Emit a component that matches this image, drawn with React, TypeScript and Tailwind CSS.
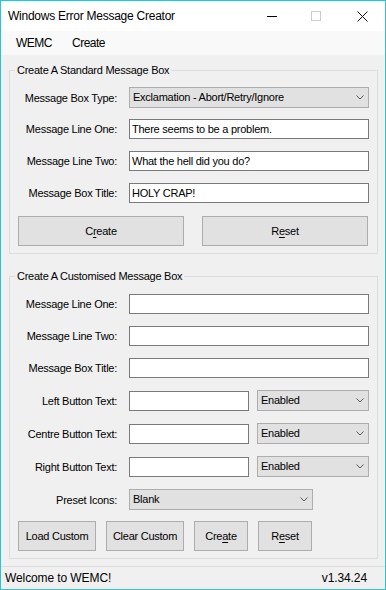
import React from "react";

function Sel({ w, text }: { w: string; text: string }) {
  return (
    <div className={`${w} h-[21px] bg-[#e1e1e1] border border-[#adadad] flex items-center pl-[3px] pr-[4px] shrink-0`}>
      <span className="flex-1 whitespace-nowrap">{text}</span>
      <svg width="8" height="5" viewBox="0 0 8 5" className="shrink-0">
        <path d="M0.5 0.5 L4 4 L7.5 0.5" stroke="#5a5a5a" strokeWidth="1" fill="none" />
      </svg>
    </div>
  );
}

function Inp({ w, text }: { w: string; text?: string }) {
  return (
    <div className={`${w} h-[20px] bg-white border border-[#7a7a7a] flex items-center pl-[2px] shrink-0 whitespace-nowrap`}>
      {text}
    </div>
  );
}

function Label({ children }: { children: React.ReactNode }) {
  return <div className="w-[107px] text-right mr-[12px] whitespace-nowrap shrink-0 leading-[14px]">{children}</div>;
}

function Btn({ w, children }: { w: string; children: React.ReactNode }) {
  return (
    <div className={`${w} h-[30px] bg-[#e1e1e1] border border-[#adadad] flex items-center justify-center whitespace-nowrap shrink-0`}>
      {children}
    </div>
  );
}

export default function App() {
  return (
    <div className="w-[386px] h-[590px] border border-[#2ec3d2] bg-[#f0f0f0] flex flex-col text-black font-['Liberation_Sans',Arial,sans-serif] text-[11px] tracking-[-0.25px] overflow-hidden">
      {/* Title bar */}
      <div className="h-[30px] bg-white flex items-center shrink-0">
        <div className="pl-[7px] text-[12px] tracking-[-0.25px] flex-1 whitespace-nowrap">Windows Error Message Creator</div>
        <div className="w-[46px] h-[30px] flex items-center justify-center pl-[3px]">
          <svg width="10" height="10" viewBox="0 0 10 10">
            <path d="M0 5.5 H10" stroke="#000" strokeWidth="1" />
          </svg>
        </div>
        <div className="w-[46px] h-[30px] flex items-center justify-center">
          <svg width="10" height="10" viewBox="0 0 10 10">
            <rect x="0.5" y="0.5" width="9" height="9" stroke="#cccccc" strokeWidth="1" fill="none" />
          </svg>
        </div>
        <div className="w-[46px] h-[30px] flex items-center justify-center">
          <svg width="11" height="11" viewBox="0 0 11 11">
            <path d="M0.5 0.5 L10.5 10.5 M10.5 0.5 L0.5 10.5" stroke="#111" strokeWidth="1" fill="none" />
          </svg>
        </div>
      </div>
      {/* Menu bar */}
      <div className="h-[24px] bg-[#f9f9f9] flex items-center pl-[15px] text-[12px] tracking-[-0.5px] shrink-0">
        <span className="w-[56px]">WEMC</span>
        <span>Create</span>
      </div>

      {/* Group 1 */}
      <fieldset className="mt-[8px] ml-[8px] w-[369px] border border-[#dcdcdc] px-0 pt-[10px] pb-[7px] shrink-0">
        <legend className="ml-[5px] px-[2px] leading-[14px] text-[11px]">Create A Standard Message Box</legend>
        <div className="flex items-center">
          <Label>Message Box Type:</Label>
          <Sel w="w-[240px]" text="Exclamation - Abort/Retry/Ignore" />
        </div>
        <div className="flex items-center mt-[11px]">
          <Label>Message Line One:</Label>
          <Inp w="w-[240px]" text="There seems to be a problem." />
        </div>
        <div className="flex items-center mt-[12px]">
          <Label>Message Line Two:</Label>
          <Inp w="w-[240px]" text="What the hell did you do?" />
        </div>
        <div className="flex items-center mt-[12px]">
          <Label>Message Box Title:</Label>
          <Inp w="w-[240px]" text="HOLY CRAP!" />
        </div>
        <div className="flex mt-[13px] ml-[8px] gap-[18px]">
          <Btn w="w-[166px]">
            <span>
              C<span className="underline underline-offset-[2px]">r</span>eate
            </span>
          </Btn>
          <Btn w="w-[166px]">
            <span>
              R<span className="underline underline-offset-[2px]">e</span>set
            </span>
          </Btn>
        </div>
      </fieldset>

      {/* Group 2 */}
      <fieldset className="mt-[15px] ml-[8px] w-[369px] border border-[#dcdcdc] px-0 pt-[11px] pb-[7px] shrink-0">
        <legend className="ml-[5px] px-[2px] leading-[14px] text-[11px]">Create A Customised Message Box</legend>
        <div className="flex items-center">
          <Label>Message Line One:</Label>
          <Inp w="w-[240px]" />
        </div>
        <div className="flex items-center mt-[12px]">
          <Label>Message Line Two:</Label>
          <Inp w="w-[240px]" />
        </div>
        <div className="flex items-center mt-[12px]">
          <Label>Message Box Title:</Label>
          <Inp w="w-[240px]" />
        </div>
        <div className="flex items-center mt-[12px]">
          <Label>Left Button Text:</Label>
          <Inp w="w-[120px]" />
          <div className="ml-[8px]">
            <Sel w="w-[112px]" text="Enabled" />
          </div>
        </div>
        <div className="flex items-center mt-[12px]">
          <Label>Centre Button Text:</Label>
          <Inp w="w-[120px]" />
          <div className="ml-[8px]">
            <Sel w="w-[112px]" text="Enabled" />
          </div>
        </div>
        <div className="flex items-center mt-[12px]">
          <Label>Right Button Text:</Label>
          <Inp w="w-[120px]" />
          <div className="ml-[8px]">
            <Sel w="w-[112px]" text="Enabled" />
          </div>
        </div>
        <div className="flex items-center mt-[12px]">
          <Label>Preset Icons:</Label>
          <Sel w="w-[184px]" text="Blank" />
        </div>
        <div className="flex mt-[11px] ml-[8px] gap-[10px]">
          <Btn w="w-[78px]">Load Custom</Btn>
          <Btn w="w-[78px]">Clear Custom</Btn>
          <Btn w="w-[54px]">
            <span>
              Cre<span className="underline underline-offset-[2px]">a</span>te
            </span>
          </Btn>
          <Btn w="w-[54px]">
            <span>
              R<span className="underline underline-offset-[2px]">e</span>set
            </span>
          </Btn>
        </div>
      </fieldset>

      {/* Status bar */}
      <div className="mt-auto h-[23px] border-t border-[#dcdcdc] flex items-center justify-between pl-[4px] pr-[18px] text-[12px] tracking-[-0.1px] shrink-0">
        <span>Welcome to WEMC!</span>
        <span>v1.34.24</span>
      </div>
    </div>
  );
}
